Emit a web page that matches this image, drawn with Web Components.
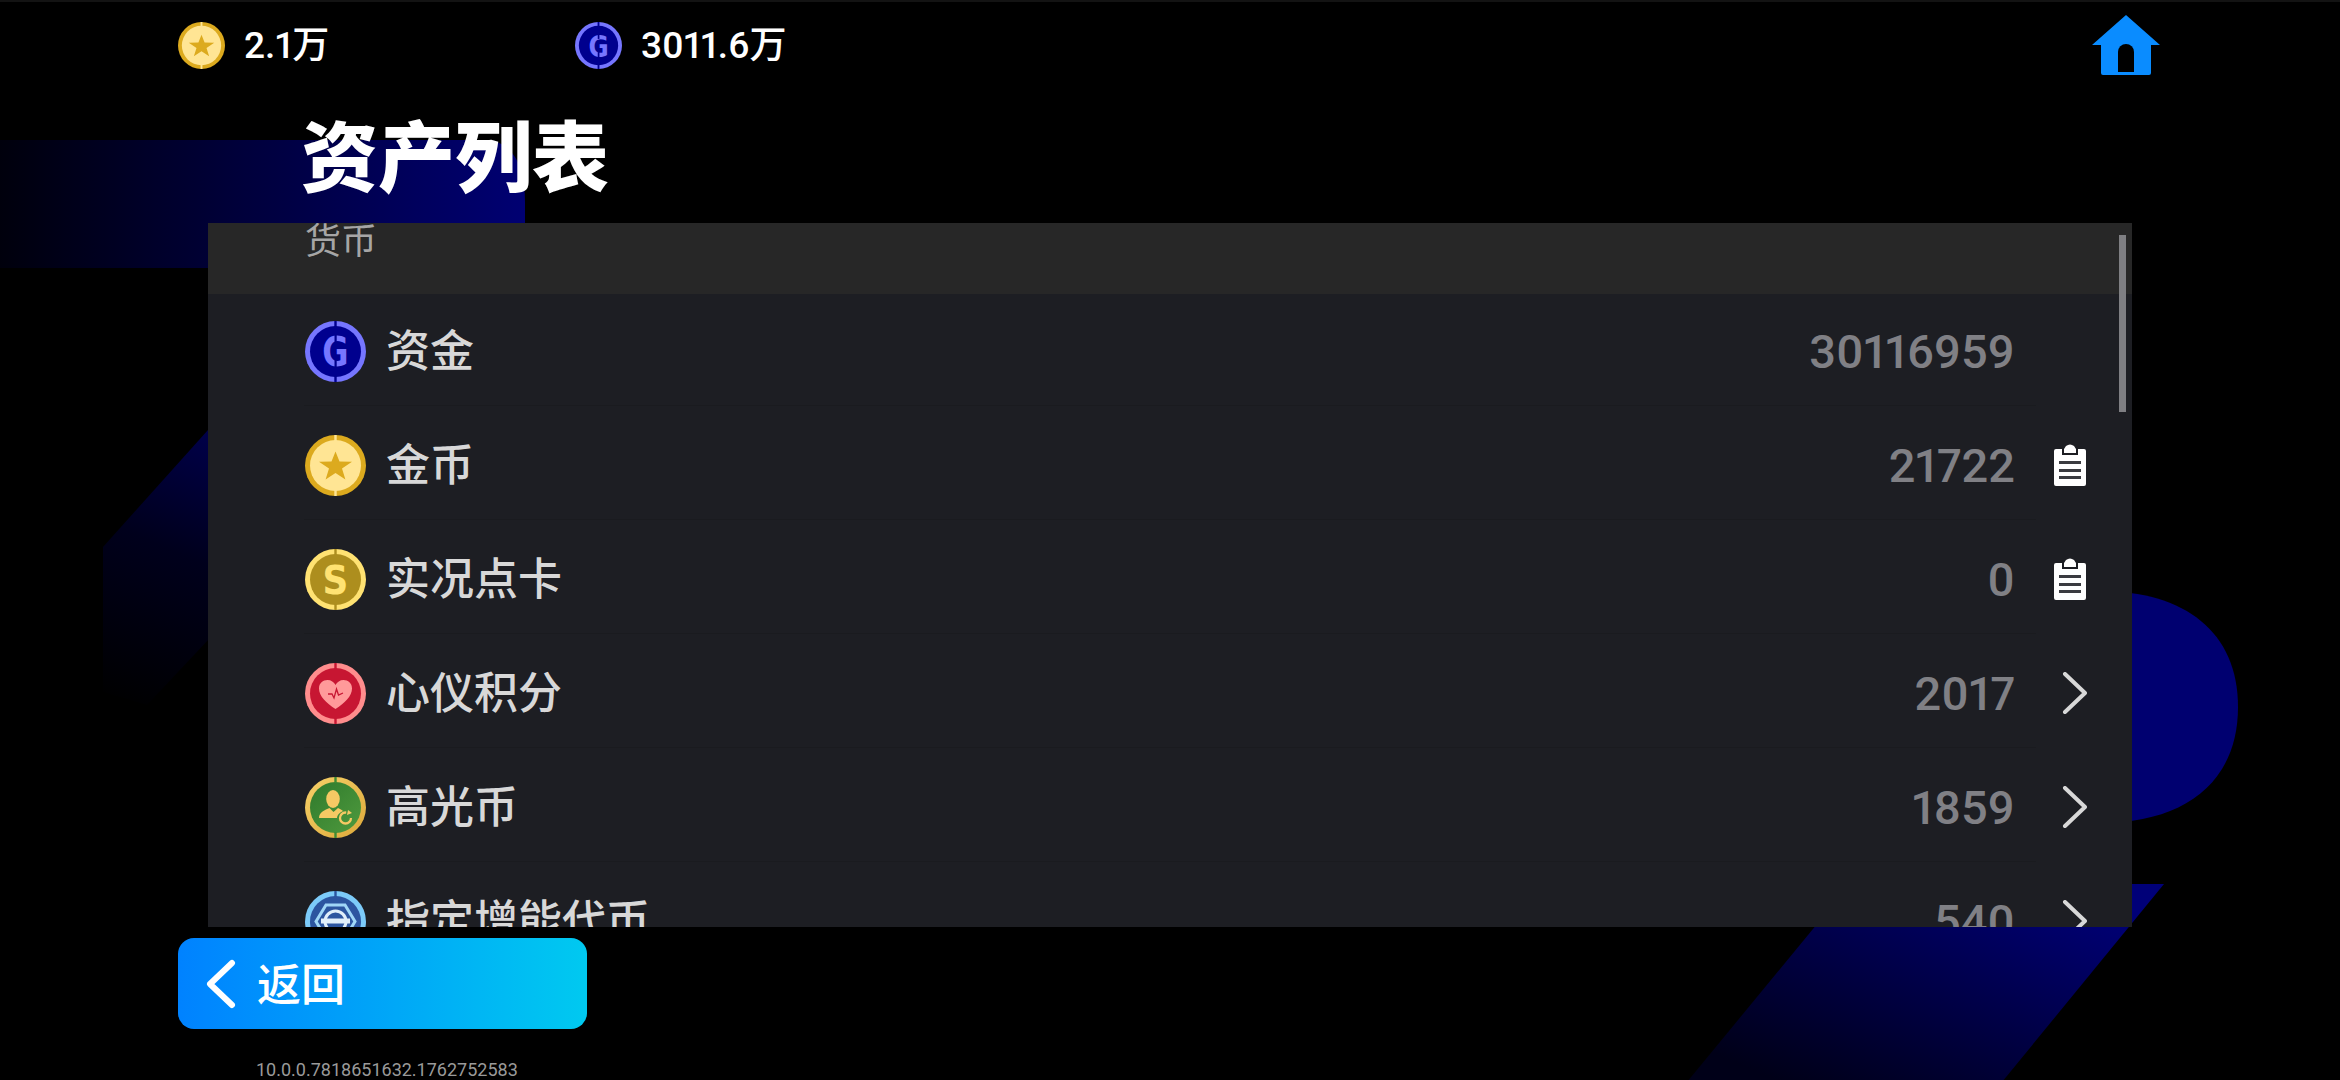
<!DOCTYPE html>
<html lang="zh">
<head>
<meta charset="utf-8">
<title>资产列表</title>
<style>
  html, body { margin: 0; background: #000; }
</style>
</head>
<body>
<app-screen>
  <top-bar slot="top">
    <coin-stat kind="star" value="2.1万"></coin-stat>
    <coin-stat kind="g" value="3011.6万"></coin-stat>
  </top-bar>
  <asset-panel slot="panel" title="资产列表" section="货币">
    <asset-row kind="g" label="资金" value="30116959"></asset-row>
    <asset-row kind="star" label="金币" value="21722" trail="clip"></asset-row>
    <asset-row kind="s" label="实况点卡" value="0" trail="clip"></asset-row>
    <asset-row kind="heart" label="心仪积分" value="2017" trail="more"></asset-row>
    <asset-row kind="green" label="高光币" value="1859" trail="more"></asset-row>
    <asset-row kind="blue" label="指定增能代币" value="540" trail="more"></asset-row>
  </asset-panel>
  <back-button slot="back">返回</back-button>
  <span slot="version">10.0.0.7818651632.1762752583</span>
</app-screen>

<script>
const CJK = '"Noto Sans CJK SC", sans-serif'
const NUM = 'Roboto, "Noto Sans CJK SC", sans-serif'

// el interior de cada moneda, en un viewBox de 61x61
const coins = {
  g: {
    ring: '#7676ff', disc: '#00008e', notch: '#00008e',
    art: `<text transform="translate(30.5 45) scale(.8 1)" text-anchor="middle" font-family="'DejaVu Sans', sans-serif" font-weight="700" font-size="40" fill="#7676ff">G</text>
          <rect x="29.500" y="14" width="2.200" height="8" fill="#00008e"/>
          <rect x="29.500" y="39" width="2.200" height="8" fill="#00008e"/>`
  },
  star: {
    ring: '#dcaa1e', disc: '#ffe594', notch: '#ffe594',
    art: `<polygon points="30.5,16.5 34.5,26.6 47,26.8 37,33.6 40.4,44.5 30.5,38 20.6,44.5 24,33.6 14,26.8 26.5,26.6" fill="#dcaa1e"/>`
  },
  s: {
    ring: '#ffe272', disc: '#ad8e1e', notch: '#ad8e1e',
    art: `<text transform="translate(30.5 45) scale(.92 1)" text-anchor="middle" font-family="'DejaVu Sans', sans-serif" font-weight="700" font-size="39" fill="#ffe272">S</text>`
  },
  heart: {
    ring: '#ff8d8d', disc: '#c71632', notch: '#c71632',
    art: `<path d="M30.5 46 C21 40 14 33 14 25.500 C14 20 18 17 22.500 17 C26 17 29 19 30.500 22 C32 19 35 17 38.500 17 C43 17 47 20 47 25.500 C47 33 40 40 30.500 46Z" fill="#ff9a9a"/>
          <polyline points="23,31 27,31 29,35 31.500,26 33.500,32 38,30" fill="none" stroke="#c71632" stroke-width="1.300"/>`
  },
  green: {
    ring: 'url(#goldRing)', disc: 'url(#greenDisc)', notch: '#3f8c33',
    art: `<ellipse cx="28" cy="22" rx="6.800" ry="9" fill="#f6c964"/>
          <path d="M14 41 C14 35 20 33 24.500 31 L28.500 35 L33 31 C35 32 37 33 38 34 C34 36 32 38 32 41Z" fill="#f6c964"/>
          <circle cx="40.500" cy="41" r="5.500" fill="none" stroke="#f6c964" stroke-width="2.300" stroke-dasharray="26 9"/>
          <polygon points="43,33 47,36 42,38" fill="#f6c964"/>`
  },
  blue: {
    ring: '#7ccbf9', disc: '#2c55a0', notch: '#2c55a0',
    art: `<polygon points="21,14 40,14 50,30.500 40,47 21,47 11,30.500" fill="none" stroke="#9fd6f7" stroke-width="3"/>
          <circle cx="30.500" cy="30.500" r="10.500" fill="none" stroke="#e0eefa" stroke-width="3"/>
          <rect x="16" y="27.500" width="29" height="5" fill="#e0eefa"/>`
  }
}

class CoinIcon extends HTMLElement {
  connectedCallback() {
    const coin = coins[this.getAttribute('kind')]
    const size = this.getAttribute('size') || 61

    this.attachShadow({ mode: 'open' }).innerHTML = `
      <style>
        :host { display: block; flex: none; }
        svg { display: block; }
      </style>
      <svg width="${size}" height="${size}" viewBox="0 0 61 61">
        <defs>
          <linearGradient id="goldRing" x1="0" y1="0" x2="1" y2="1"><stop offset="0" stop-color="#f7d169"/><stop offset="1" stop-color="#dca83a"/></linearGradient>
          <linearGradient id="greenDisc" x1="0" y1="0" x2="1" y2="1"><stop offset="0" stop-color="#2f7a2c"/><stop offset="1" stop-color="#4f9a3e"/></linearGradient>
        </defs>
        <circle cx="30.500" cy="30.500" r="30.500" fill="${coin.ring}"/>
        <circle cx="30.500" cy="30.500" r="25.500" fill="${coin.disc}"/>
        <rect x="29.300" y="0" width="2.400" height="6" fill="${coin.notch}"/>
        <rect x="29.300" y="55" width="2.400" height="6" fill="${coin.notch}"/>
        ${coin.art}
      </svg>`
  }
}

class CoinStat extends HTMLElement {
  connectedCallback() {
    this.attachShadow({ mode: 'open' }).innerHTML = `
      <style>
        :host { display: flex; align-items: center; width: 397px; gap: 19px; }
        span { font: 500 37px/1 ${NUM}; font-variant-numeric: proportional-nums; color: #fff; }
      </style>
      <coin-icon kind="${this.getAttribute('kind')}" size="47"></coin-icon>
      <span>${this.getAttribute('value')}</span>`
  }
}

class TopBar extends HTMLElement {
  constructor() {
    super()
    this.attachShadow({ mode: 'open' }).innerHTML = `
      <style>
        :host { display: flex; align-items: center; height: 86px; padding: 0 180px 0 178px; }
        svg { display: block; margin-left: auto; }
      </style>
      <slot></slot>
      <svg width="68" height="60" viewBox="0 0 68 60">
        <path d="M34 0 L68 30 L59 30 L59 58 Q59 60 57 60 L11 60 Q9 60 9 58 L9 30 L0 30Z" fill="#0a8cff"/>
        <path d="M26 57 L26 37 A8 8 0 0 1 42 37 L42 57Z" fill="#000"/>
      </svg>`
  }
}

class AssetPanel extends HTMLElement {
  connectedCallback() {
    this.attachShadow({ mode: 'open' }).innerHTML = `
      <style>
        :host { display: block; }
        h1 {
          margin: 0;
          height: 130px;
          padding: 0 0 5px 301px;
          font: 900 77px/130px ${CJK};
          color: #fff;
        }
        .box {
          position: relative;
          margin-left: 208px;
          width: 1924px;
          height: 704px;
          overflow: hidden;
          background: #1d1e23;
        }
        .section {
          height: 71px;
          padding-left: 97px;
          background: #272727;
          font: 400 36px/30px ${CJK};
          color: #a6a6a6;
          overflow: hidden;
        }
        .bar {
          position: absolute;
          left: 1911px;
          top: 12px;
          width: 7px;
          height: 177px;
          background: #7f7f83;
        }
      </style>
      <h1>${this.getAttribute('title')}</h1>
      <div class="box">
        <div class="section">${this.getAttribute('section')}</div>
        <slot></slot>
        <div class="bar"></div>
      </div>`
    this.removeAttribute('title')
  }
}

class AssetRow extends HTMLElement {
  connectedCallback() {
    const trail = this.getAttribute('trail')
    let icon = ''

    if (trail === 'clip') {
      icon = `<svg width="34" height="42" viewBox="0 0 34 42">
        <path d="M11 5 L13 2 Q17 -1 21 2 L23 5 L23 9 L11 9Z" fill="#fff"/>
        <path d="M1 7 Q1 5 3 5 L9 5 L9 11 L25 11 L25 5 L31 5 Q33 5 33 7 L33 40 Q33 42 31 42 L3 42 Q1 42 1 40Z" fill="#fff"/>
        <rect x="6" y="17" width="22" height="3" fill="#3a3b40"/>
        <rect x="6" y="25" width="22" height="3" fill="#3a3b40"/>
        <rect x="6" y="32" width="22" height="3" fill="#3a3b40"/>
      </svg>`
    } else if (trail === 'more') {
      icon = `<svg width="34" height="42" viewBox="0 0 34 42">
        <polyline points="12,2 32,21 12,40" fill="none" stroke="#d8d8d8" stroke-width="4" stroke-linecap="round" stroke-linejoin="round"/>
      </svg>`
    }

    this.attachShadow({ mode: 'open' }).innerHTML = `
      <style>
        :host {
          display: flex;
          align-items: center;
          box-sizing: border-box;
          height: 112px;
          margin: 0 96px 2px;
          padding-top: 3px;
          border-bottom: 1px solid #1a1b1f;
        }
        coin-icon { margin-left: 1px; }
        .label { margin: 0 0 6px 20px; font: 500 44px/1 ${CJK}; color: #d8d8d8; }
        .value { margin-left: auto; margin-right: 19px; font: 500 47px/1 ${NUM}; font-variant-numeric: proportional-nums; color: #808085; }
        .trail { width: 34px; height: 42px; margin-left: 19px; margin-right: -51px; }
        svg { display: block; }
      </style>
      <coin-icon kind="${this.getAttribute('kind')}"></coin-icon>
      <span class="label">${this.getAttribute('label')}</span>
      <span class="value">${this.getAttribute('value')}</span>
      <div class="trail">${icon}</div>`
  }
}

class BackButton extends HTMLElement {
  constructor() {
    super()
    this.attachShadow({ mode: 'open' }).innerHTML = `
      <style>
        :host {
          display: flex;
          align-items: center;
          box-sizing: border-box;
          width: 409px;
          height: 91px;
          padding-left: 28px;
          gap: 21px;
          border-radius: 16px;
          background: linear-gradient(90deg, #0082ff, #00c9f0);
          font: 500 44px/1 ${CJK};
          color: #fff;
        }
        svg { display: block; }
        .text { margin-bottom: 3px; }
      </style>
      <svg width="30" height="50" viewBox="0 0 30 50">
        <polyline points="26,4 4,25 26,46" fill="none" stroke="#fff" stroke-width="6" stroke-linecap="round" stroke-linejoin="round"/>
      </svg>
      <div class="text"><slot></slot></div>`
  }
}

class BgArt extends HTMLElement {
  constructor() {
    super()
    this.attachShadow({ mode: 'open' }).innerHTML = `
      <style>
        :host { position: absolute; inset: 0; display: block; }
        svg { display: block; }
      </style>
      <svg width="2340" height="1080" viewBox="0 0 2340 1080">
        <defs>
          <linearGradient id="barFill" x1="0" y1="0" x2="1" y2="0"><stop offset="0" stop-color="#00000c"/><stop offset="1" stop-color="#000072"/></linearGradient>
          <linearGradient id="sideFill" gradientUnits="userSpaceOnUse" x1="240" y1="400" x2="110" y2="700"><stop offset="0" stop-color="#000058"/><stop offset="0.500" stop-color="#00001c"/><stop offset="1" stop-color="#000"/></linearGradient>
          <linearGradient id="slashFill" x1="0" y1="1" x2="1" y2="0"><stop offset="0.100" stop-color="#000018"/><stop offset="0.900" stop-color="#000078"/></linearGradient>
        </defs>
        <path d="M0 138 L490 138 Q525 145 525 200 L525 266 L0 266Z" fill="url(#barFill)"/>
        <path d="M260 370 L103 545 L103 690 L147 703 L300 540Z" fill="url(#sideFill)"/>
        <path d="M2100 589 C2185 589 2238 630 2238 705 C2238 780 2185 821 2100 821Z" fill="#000070"/>
        <path d="M2164 882 L2002 1080 L1687 1080 L1850 882Z" fill="url(#slashFill)"/>
      </svg>`
  }
}

class AppScreen extends HTMLElement {
  constructor() {
    super()
    this.attachShadow({ mode: 'open' }).innerHTML = `
      <style>
        :host {
          position: relative;
          display: block;
          box-sizing: border-box;
          width: 2340px;
          height: 1080px;
          overflow: hidden;
          background: #000;
          border-top: 2px solid #131313;
        }
        .layer { position: relative; display: flex; flex-direction: column; }
        .foot { margin: 11px 0 0 178px; }
        .version { margin: 31px 0 0 256px; font: 400 18px/20px ${NUM}; color: #9a9a9a; }
      </style>
      <bg-art></bg-art>
      <div class="layer">
        <slot name="top"></slot>
        <slot name="panel"></slot>
        <div class="foot"><slot name="back"></slot></div>
        <div class="version"><slot name="version"></slot></div>
      </div>`
  }
}

window.customElements.define('coin-icon', CoinIcon)
window.customElements.define('coin-stat', CoinStat)
window.customElements.define('top-bar', TopBar)
window.customElements.define('asset-panel', AssetPanel)
window.customElements.define('asset-row', AssetRow)
window.customElements.define('back-button', BackButton)
window.customElements.define('bg-art', BgArt)
window.customElements.define('app-screen', AppScreen)
</script>
</body>
</html>
